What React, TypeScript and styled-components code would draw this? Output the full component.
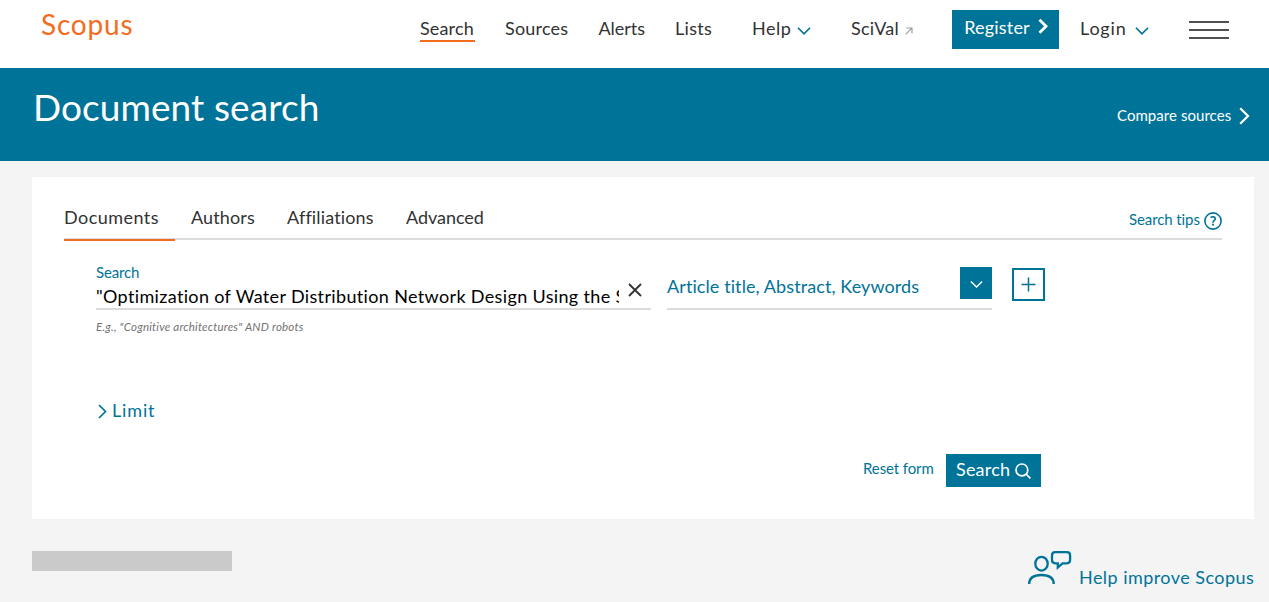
import React from "react";
import styled, { createGlobalStyle } from "styled-components";

const TEAL = "#007398";
const ORANGE = "#f36d21";
const INK = "#323232";

const Global = createGlobalStyle`
  *, *::before, *::after { box-sizing: border-box; }
  body { margin: 0; background: #f4f4f4; font-family: Lato, "Noto Sans", sans-serif; color: ${INK}; }
  button { font-family: inherit; border: 0; padding: 0; background: none; }
  a { color: inherit; text-decoration: none; }
  svg { display: block; flex: none; }
`;

const Label = styled.span<{ $size?: number; $line?: number; $track?: number; $w?: number }>`
  display: block;
  flex: none;
  white-space: nowrap;
  font-size: ${(p) => p.$size ?? 18}px;
  line-height: ${(p) => p.$line ?? 24}px;
  letter-spacing: ${(p) => p.$track ?? 0.2}px;
  width: ${(p) => (p.$w ? `${p.$w}px` : "auto")};
`;

const Page = styled.div`
  width: 100%;
  min-height: 602px;
  overflow: hidden;
`;

const Header = styled.header`
  display: flex;
  justify-content: space-between;
  align-items: flex-start;
  height: 68px;
  padding: 0 40px 0 41px;
  background: #fff;
`;

const Logo = styled.a`
  padding-top: 7px;
  && { color: ${ORANGE}; }
`;

const Nav = styled.nav`
  display: flex;
  align-items: flex-start;
  padding-top: 10px;
`;

const NavLink = styled.a<{ $active?: boolean; $gap?: number }>`
  display: flex;
  align-items: center;
  height: 32px;
  padding-top: 6px;
  margin-left: ${(p) => p.$gap ?? 30}px;
  border-bottom: 2px solid ${(p) => (p.$active ? ORANGE : "transparent")};
`;

const NavIcon = styled.span<{ $gap: number }>`
  margin-left: ${(p) => p.$gap}px;
  padding-top: 5px;
  color: ${TEAL};
`;

const Register = styled.button`
  display: flex;
  align-items: flex-start;
  gap: 8px;
  width: 107px;
  height: 39px;
  margin-left: 39px;
  padding: 5px 0 0 12px;
  && { background: ${TEAL}; color: #fff; }
  svg { margin-top: 3px; }
`;

const Burger = styled.button`
  display: flex;
  flex-direction: column;
  gap: 6px;
  margin: 11px 0 0 40px;
`;

const Bar = styled.span`
  width: 40px;
  height: 2px;
  background: #505050;
`;

const Banner = styled.section`
  display: flex;
  justify-content: space-between;
  align-items: flex-start;
  height: 93px;
  padding: 17px 19px 0 33px;
  background: ${TEAL};
  color: #fff;
`;

const Title = styled.h1`
  margin: 0;
  font-weight: 400;
`;

const Compare = styled.a`
  display: flex;
  align-items: center;
  gap: 8px;
  margin-top: 20px;
  svg { margin-top: 2px; }
`;

const Card = styled.main`
  height: 342px;
  margin: 16px 15px 0 32px;
  padding: 28px 32px 0;
  background: #fff;
`;

const Tabs = styled.div`
  display: flex;
  align-items: flex-start;
  height: 35px;
  border-bottom: 2px solid #dcdcdc;
`;

const Tab = styled.button<{ $w: number; $active?: boolean; $inset?: number }>`
  display: flex;
  flex: none;
  align-items: flex-start;
  width: ${(p) => p.$w}px;
  height: 36px;
  padding-left: ${(p) => p.$inset ?? 0}px;
  color: ${INK};
  border-bottom: ${(p) => (p.$active ? `2px solid ${ORANGE}` : "0")};
`;

const Tips = styled.a`
  display: flex;
  align-items: flex-start;
  gap: 4px;
  margin: 4px 0 0 auto;
  && { color: ${TEAL}; }
  svg { margin-top: 3px; }
`;

const Fields = styled.div`
  display: flex;
  align-items: flex-start;
  padding: 22px 0 0 32px;
`;

const QueryColumn = styled.div`
  width: 555px;
`;

const QueryField = styled.div`
  display: flex;
  justify-content: space-between;
  height: 48px;
  border-bottom: 2px solid #dcdcdc;
  color: ${TEAL};
`;

const QueryInput = styled.input`
  display: block;
  width: 523px;
  height: 24px;
  margin: 2px 0 0;
  padding: 0;
  border: 0;
  outline: 0;
  background: transparent;
  color: #000;
  font-family: inherit;
  font-size: 18px;
  line-height: 24px;
  letter-spacing: 0.35px;
`;

const Clear = styled.button`
  margin-right: 9px;
  padding-top: 10px;
  color: ${INK};
`;

const Hint = styled.div`
  padding-top: 10px;
  font-style: italic;
  color: #737373;
`;

const Select = styled.div`
  display: flex;
  justify-content: space-between;
  align-items: flex-start;
  width: 325px;
  height: 43px;
  margin: 5px 0 0 16px;
  border-bottom: 2px solid #dcdcdc;
  color: ${TEAL};
  ${Label} { margin-top: 7px; }
`;

const SquareButton = styled.button<{ $outlined?: boolean }>`
  display: flex;
  flex: none;
  align-items: center;
  justify-content: center;
  width: ${(p) => (p.$outlined ? 33 : 32)}px;
  height: ${(p) => (p.$outlined ? 33 : 32)}px;
  margin: ${(p) => (p.$outlined ? "6px 0 0 20px" : "0")};
  padding-top: ${(p) => (p.$outlined ? 0 : 2)}px;
  border: ${(p) => (p.$outlined ? `2px solid ${TEAL}` : "0")};
  background: ${(p) => (p.$outlined ? "#fff" : TEAL)};
  color: ${(p) => (p.$outlined ? TEAL : "#fff")};
`;

const Limit = styled.button`
  display: flex;
  align-items: center;
  gap: 5px;
  margin: 64px 0 0 34px;
  color: ${TEAL};
  svg { margin-top: 2px; }
`;

const Actions = styled.div`
  display: flex;
  justify-content: flex-end;
  align-items: flex-start;
  gap: 12px;
  margin: 32px 181px 0 0;
  color: ${TEAL};
`;

const Reset = styled.a`
  padding-top: 4px;
`;

const Submit = styled.button`
  display: flex;
  align-items: flex-start;
  justify-content: space-between;
  width: 95px;
  height: 33px;
  padding: 3px 10px 0;
  && { background: ${TEAL}; color: #fff; }
  svg { margin-top: 6px; }
`;

const Footer = styled.footer`
  display: flex;
  justify-content: space-between;
  align-items: flex-start;
  padding: 32px 15px 0 32px;
`;

const Placeholder = styled.div`
  width: 200px;
  height: 20px;
  background: #cacaca;
`;

const Feedback = styled.a`
  display: flex;
  align-items: flex-start;
  gap: 7px;
  && { color: ${TEAL}; }
  ${Label} { margin-top: 14px; }
`;

const ChevronDown = ({ w = 14, h = 10, stroke = 1.8 }: { w?: number; h?: number; stroke?: number }) => (
  <svg width={w} height={h} viewBox="0 0 15 10" fill="none" stroke="currentColor" strokeWidth={stroke}>
    <path d="M1 1.5 7.5 8 14 1.5" />
  </svg>
);

export default function App() {
  return (
    <Page>
      <Global />
      <Header>
        <Logo href="#"><Label $size={28} $line={34} $track={0.8}>Scopus</Label></Logo>
        <Nav>
          <NavLink href="#" $active $gap={0}><Label $w={55} $track={0.15}>Search</Label></NavLink>
          <NavLink href="#" $gap={30}><Label $w={63.5}>Sources</Label></NavLink>
          <NavLink href="#"><Label $w={46.5} $track={-0.05}>Alerts</Label></NavLink>
          <NavLink href="#"><Label $w={37} $track={0.3}>Lists</Label></NavLink>
          <NavLink href="#" $gap={40}>
            <Label $w={40} $track={0.5}>Help</Label>
            <NavIcon $gap={4.5}><ChevronDown /></NavIcon>
          </NavLink>
          <NavLink href="#" $gap={40.5}>
            <Label $w={49} $track={0.2}>SciVal</Label>
            <NavIcon $gap={5}>
              <svg width="8" height="8" viewBox="0 0 8 8" fill="none" stroke="#999" strokeWidth="1.1">
                <path d="M.6 7.4 6.8 1.2M1.5 1H7v5.5" />
              </svg>
            </NavIcon>
          </NavLink>
          <Register>
            <Label $w={66}>Register</Label>
            <svg width="11" height="17" viewBox="0 0 11 17" fill="none" stroke="currentColor" strokeWidth="2.8">
              <path d="M1.5 1.8 8 8.3 1.5 14.8" />
            </svg>
          </Register>
          <NavLink href="#" $gap={21}>
            <Label $w={47} $track={0.8}>Login</Label>
            <NavIcon $gap={8}><ChevronDown /></NavIcon>
          </NavLink>
          <Burger aria-label="Menu"><Bar /><Bar /><Bar /></Burger>
        </Nav>
      </Header>

      <Banner>
        <Title><Label $size={37} $line={44} $track={0.08}>Document search</Label></Title>
        <Compare href="#">
          <Label $size={15} $line={20} $w={114} $track={0.05}>Compare sources</Label>
          <svg width="11" height="18" viewBox="0 0 11 18" fill="none" stroke="currentColor" strokeWidth="2.2">
            <path d="M1.2 1.2 9 9 1.2 16.8" />
          </svg>
        </Compare>
      </Banner>

      <Card>
        <Tabs>
          <Tab $w={111} $active><Label $track={0.45}>Documents</Label></Tab>
          <Tab $w={112} $inset={16}><Label $track={0.12}>Authors</Label></Tab>
          <Tab $w={119}><Label $track={0.15}>Affiliations</Label></Tab>
          <Tab $w={90}><Label $track={-0.05}>Advanced</Label></Tab>
          <Tips href="#">
            <Label $size={15} $line={20} $w={71} $track={-0.1}>Search tips</Label>
            <svg width="18" height="18" viewBox="0 0 18 18" fill="none" stroke="currentColor" strokeWidth="1.6">
              <circle cx="9" cy="9" r="8.1" />
              <path d="M6.6 5.6C8 4.4 11.3 4.5 11.3 6.7 11.3 8.5 9 8.4 9 10.7" />
              <path d="M9 11.8v1.8" strokeWidth="1.9" />
            </svg>
          </Tips>
        </Tabs>

        <Fields>
          <QueryColumn>
            <QueryField>
              <div>
                <Label $size={15} $line={20} $track={-0.15}>Search</Label>
                <QueryInput
                  readOnly
                  aria-label="Search"
                  value={'"Optimization of Water Distribution Network Design Using the Soccer League Competition Algorithm"'}
                />
              </div>
              <Clear aria-label="Clear">
                <svg width="14" height="14" viewBox="0 0 14 14" fill="none" stroke="currentColor" strokeWidth="1.8">
                  <path d="m1 1 12 12M13 1 1 13" />
                </svg>
              </Clear>
            </QueryField>
            <Hint><Label $size={11.5} $line={14} $track={0.2}>E.g., "Cognitive architectures" AND robots</Label></Hint>
          </QueryColumn>
          <Select>
            <Label $track={0.09}>Article title, Abstract, Keywords</Label>
            <SquareButton aria-label="Open list"><ChevronDown w={13} h={9} stroke={1.6} /></SquareButton>
          </Select>
          <SquareButton $outlined aria-label="Add field">
            <svg width="15" height="15" viewBox="0 0 15 15" fill="none" stroke="currentColor" strokeWidth="1.5">
              <path d="M7.5 .5v14M.5 7.5h14" />
            </svg>
          </SquareButton>
        </Fields>

        <Limit>
          <svg width="9" height="15" viewBox="0 0 9 15" fill="none" stroke="currentColor" strokeWidth="1.7">
            <path d="M1 1 7.5 7.5 1 14" />
          </svg>
          <Label $track={0.85}>Limit</Label>
        </Limit>

        <Actions>
          <Reset href="#"><Label $size={15} $line={20} $w={71} $track={-0.1}>Reset form</Label></Reset>
          <Submit>
            <Label $track={0.2}>Search</Label>
            <svg width="16" height="16" viewBox="0 0 16 16" fill="none" stroke="currentColor" strokeWidth="1.7">
              <circle cx="6.9" cy="6.9" r="5.9" />
              <path d="m11 11 4.4 4.4" />
            </svg>
          </Submit>
        </Actions>
      </Card>

      <Footer>
        <Placeholder />
        <Feedback href="#">
          <svg width="44" height="34" viewBox="0 0 44 34" fill="none" stroke="currentColor" strokeWidth="2.3">
            <ellipse cx="13.5" cy="12.7" rx="6.2" ry="6.9" />
            <path d="M1.2 33c0-6 4.5-9 12.1-9s12.4 3 12.4 9" />
            <path d="M27.3 1.2h11.5c2.3 0 3.3 1 3.3 3.2v4.7c0 2.2-1 3.2-3.3 3.2h-4.3l-4.7 4.2v-4.2h-2.5c-2.3 0-3.3-1-3.3-3.2V4.4c0-2.2 1-3.2 3.3-3.2Z" />
          </svg>
          <Label $w={175} $track={0.45}>Help improve Scopus</Label>
        </Feedback>
      </Footer>
    </Page>
  );
}
